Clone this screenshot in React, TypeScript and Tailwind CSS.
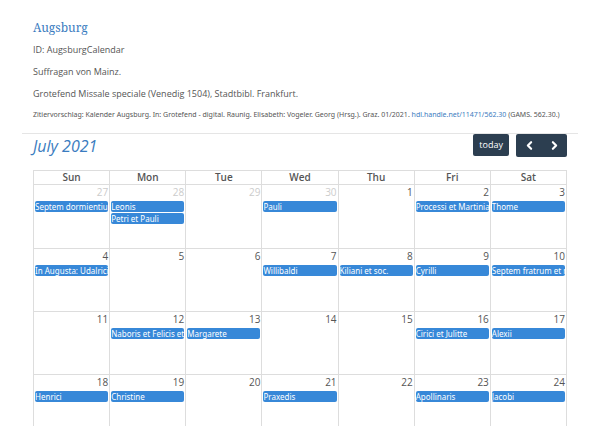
import { ChevronLeft, ChevronRight } from "lucide-react";

type Day = { date: number; muted?: boolean; events?: string[] };

const weekdays = ["Sun", "Mon", "Tue", "Wed", "Thu", "Fri", "Sat"];

const weeks: Day[][] = [
  [
    { date: 27, muted: true, events: ["Septem dormientium"] },
    { date: 28, muted: true, events: ["Leonis", "Petri et Pauli"] },
    { date: 29, muted: true },
    { date: 30, muted: true, events: ["Pauli"] },
    { date: 1 },
    { date: 2, events: ["Processi et Martiniani"] },
    { date: 3, events: ["Thome"] },
  ],
  [
    { date: 4, events: ["In Augusta: Udalrici"] },
    { date: 5 },
    { date: 6 },
    { date: 7, events: ["Willibaldi"] },
    { date: 8, events: ["Kiliani et soc."] },
    { date: 9, events: ["Cyrilli"] },
    { date: 10, events: ["Septem fratrum et m"] },
  ],
  [
    { date: 11 },
    { date: 12, events: ["Naboris et Felicis et s"] },
    { date: 13, events: ["Margarete"] },
    { date: 14 },
    { date: 15 },
    { date: 16, events: ["Cirici et Julitte"] },
    { date: 17, events: ["Alexii"] },
  ],
  [
    { date: 18, events: ["Henrici"] },
    { date: 19, events: ["Christine"] },
    { date: 20 },
    { date: 21, events: ["Praxedis"] },
    { date: 22 },
    { date: 23, events: ["Apollinaris"] },
    { date: 24, events: ["Jacobi"] },
  ],
];

function DayCell({ day }: { day: Day }) {
  return (
    <td className="border border-[#dddddd] p-0 align-top">
      <div
        className={`pr-px pb-0.5 text-right text-[10px] leading-[14px] ${day.muted ? "text-[#cccccc]" : "text-[#555555]"}`}
      >
        {day.date}
      </div>
      <div className="flex flex-col gap-px px-px">
        {day.events?.map((name) => (
          <div
            key={name}
            className="h-[11px] overflow-hidden rounded-xs bg-[#3788d8] font-['Noto_Sans','Open_Sans',sans-serif] text-[8px] leading-[11px] whitespace-nowrap text-white"
          >
            {name}
          </div>
        ))}
      </div>
    </td>
  );
}

export default function App() {
  return (
    <main className="h-screen overflow-hidden bg-white px-[22px] pt-[21px] font-['Open_Sans','Noto_Sans',sans-serif] text-[9px] text-[#555555]">
      <header className="flex flex-col gap-2 border-b border-[#e5e5e5] px-[11px] pb-3">
        <h1 className="font-['Noto_Serif','Droid_Serif','Liberation_Serif',serif] text-[12px] leading-[14px] text-[#3b7cc0]">
          Augsburg
        </h1>
        <p className="leading-[14px]">ID: AugsburgCalendar</p>
        <p className="leading-[14px]">Suffragan von Mainz.</p>
        <p className="leading-[14px]">Grotefend Missale speciale (Venedig 1504), Stadtbibl. Frankfurt.</p>
        <p className="font-['Noto_Sans','Open_Sans',sans-serif] text-[7px] leading-3 whitespace-nowrap">
          Zitiervorschlag: Kalender Augsburg. In: Grotefend - digital. Raunig. Elisabeth: Vogeler. Georg (Hrsg.). Graz.
          01/2021.{" "}
          <a href="#handle" className="text-[#3b7cc0]">
            hdl.handle.net/11471/562.30
          </a>{" "}
          (GAMS. 562.30.)
        </p>
      </header>
      <section className="px-[11px]">
        <div className="flex items-start justify-between pb-3">
          <h2 className="text-base leading-6 text-[#3b7cc0] italic">July 2021</h2>
          <div className="flex gap-[7px]">
            <button className="h-[22px] rounded-xs bg-[#2c3e50] px-1.5 text-white">today</button>
            <div className="flex h-[23px] rounded-xs bg-[#2c3e50] text-white">
              <button aria-label="Previous month" className="flex w-[26px] items-center justify-center">
                <ChevronLeft size={13} strokeWidth={4} />
              </button>
              <button aria-label="Next month" className="flex w-[25px] items-center justify-center">
                <ChevronRight size={13} strokeWidth={4} />
              </button>
            </div>
          </div>
        </div>
        <table className="w-full table-fixed border-collapse">
          <thead>
            <tr>
              {weekdays.map((name) => (
                <th
                  key={name}
                  className="h-[14px] border border-[#dddddd] p-0 text-[10px] leading-[13px] font-semibold"
                >
                  {name}
                </th>
              ))}
            </tr>
          </thead>
          <tbody>
            {weeks.map((week) => (
              <tr key={week[0].date} className="h-[63px] first:h-16">
                {week.map((day) => (
                  <DayCell key={day.date} day={day} />
                ))}
              </tr>
            ))}
          </tbody>
        </table>
      </section>
    </main>
  );
}
